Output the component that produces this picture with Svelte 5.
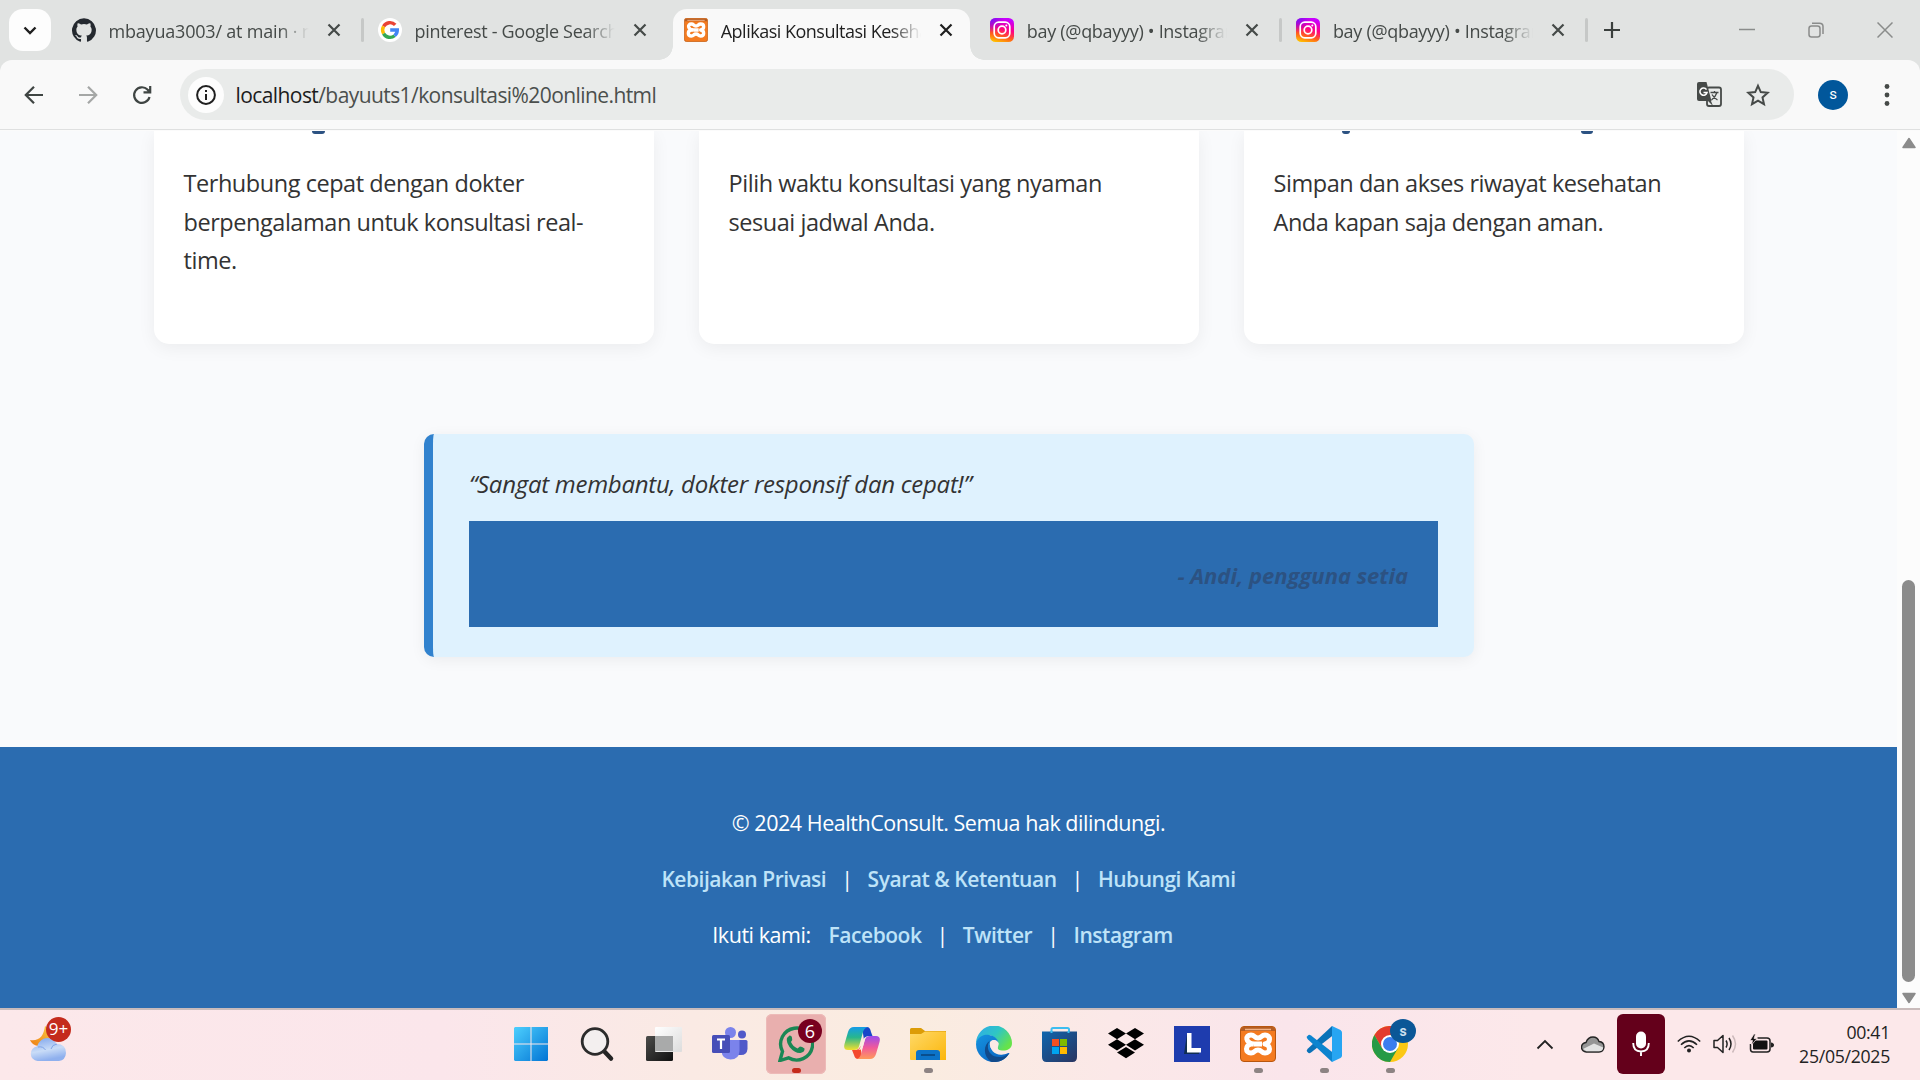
<script>
  const tabs = [
    { icon: 'github', title: 'mbayua3003/ at main · mbayua', ls: -0.2 },
    { icon: 'google', title: 'pinterest - Google Search', ls: -0.32, sep: true },
    { icon: 'xampp', title: 'Aplikasi Konsultasi Kesehatan', ls: -0.5, active: true },
    { icon: 'insta', title: 'bay (@qbayyy) • Instagram', ls: -0.3 },
    { icon: 'insta', title: 'bay (@qbayyy) • Instagram', ls: -0.3, sep: true }
  ];
  const cards = [
    { lines: ['Terhubung cepat dengan dokter', 'berpengalaman untuk konsultasi real-', 'time.'], marks: [[158, 13]] },
    { lines: ['Pilih waktu konsultasi yang nyaman', 'sesuai jadwal Anda.'], marks: [] },
    { lines: ['Simpan dan akses riwayat kesehatan', 'Anda kapan saja dengan aman.'], marks: [[98, 8], [337, 12]] }
  ];
  const apps = [
    'start', 'search', 'view', 'teams', 'whatsapp', 'copilot', 'files', 'edge',
    'store', 'dropbox', 'lapp', 'xampp', 'code', 'chrome'
  ];
  const running = ['files', 'xampp', 'code', 'chrome'];
</script>

{#snippet xampp()}
  <rect x="0.5" y="0.5" width="35" height="35" rx="3.5" fill="#f47b20" stroke="#b8560f" />
  <path d="M1 4Q1 1 4 1H32Q35 1 35 4V5H1Z" fill="#b45d22" />
  <path d="M5 3.500H31" stroke="#f0b184" stroke-width="1.500" />
  <path d="M14 18H22M14 18C5 17 5 9 11 9C15 9 14 12 18 12C22 12 21 9 25 9C31 9 31 17 25 18C31 19 31 27 25 27C21 27 22 24 18 24C14 24 15 27 11 27C5 27 5 19 11 18" fill="none" stroke="#fff" stroke-width="5" stroke-linejoin="round" />
  <path d="M12 14.500V13.500H13M24 14.500V13.500M12 21.500V22.500M24 21.500V22.500" fill="none" stroke="#f47b20" stroke-width="1.500" />
{/snippet}

{#snippet closeX()}
  <svg class="close" viewBox="0 0 14 14" width="14" height="14"><path d="M1.500 1.500L12.500 12.500M12.500 1.500L1.500 12.500" fill="none" stroke="currentColor" stroke-width="2.200" /></svg>
{/snippet}

<div class="screen">
  <header class="strip">
    <button class="chev" aria-label="Tabs"><svg width="14" height="9" viewBox="0 0 14 9"><path d="M1.500 1.500L7 7L12.500 1.500" fill="none" stroke="#1f1f1f" stroke-width="2.400" /></svg></button>
    {#each tabs as t}
      <div class="tab" class:active={t.active} class:sep={t.sep}>
        <svg class="fav" width="24" height="24" viewBox="0 0 24 24">
          {#if t.icon === 'github'}
            <path fill="#24292f" d="M12 .3a12 12 0 0 0-3.800 23.380c.6.120.83-.26.83-.57v-2.230c-3.340.72-4.040-1.420-4.040-1.420-.55-1.390-1.330-1.760-1.330-1.760-1.090-.74.08-.73.08-.73 1.200.09 1.840 1.240 1.840 1.240 1.070 1.830 2.810 1.300 3.490 1 .11-.78.42-1.310.76-1.610-2.660-.3-5.470-1.330-5.470-5.930 0-1.310.47-2.380 1.240-3.220-.14-.3-.54-1.520.1-3.180 0 0 1-.32 3.300 1.230a11.500 11.500 0 0 1 6 0c2.280-1.550 3.290-1.230 3.290-1.230.64 1.660.24 2.880.12 3.180a4.650 4.650 0 0 1 1.230 3.220c0 4.610-2.800 5.630-5.480 5.920.42.36.81 1.100.81 2.220v3.290c0 .31.2.69.82.57A12 12 0 0 0 12 .3" />
          {:else if t.icon === 'google'}
            <circle cx="12" cy="12" r="12" fill="#fff" />
            <g fill="none" stroke-width="3.400">
              <path d="M17.200 6.900A7.300 7.300 0 0 0 5.600 8.400" stroke="#ea4335" />
              <path d="M5.600 8.400A7.300 7.300 0 0 0 5.600 15.600" stroke="#fbbc05" />
              <path d="M5.600 15.600A7.300 7.300 0 0 0 16.600 17.700" stroke="#34a853" />
              <path d="M16.600 17.700A7.300 7.300 0 0 0 19.300 12H12.200" stroke="#4285f4" />
            </g>
          {:else if t.icon === 'xampp'}
            <g transform="scale(.6667)">{@render xampp()}</g>
          {:else}
            <defs>
              <linearGradient id="ig" x1="0.200" y1="1" x2="0.500" y2="0"><stop offset="0" stop-color="#ffc400" /><stop offset=".3" stop-color="#ff5a1f" /><stop offset=".6" stop-color="#ff0086" /><stop offset="1" stop-color="#c800ff" /></linearGradient>
              <radialGradient id="igc" cx="0" cy="0" r=".6"><stop offset="0" stop-color="#6a14ff" /><stop offset="1" stop-color="#6a14ff" stop-opacity="0" /></radialGradient>
            </defs>
            <rect width="24" height="24" rx="5.500" fill="url(#ig)" /><rect width="24" height="24" rx="5.500" fill="url(#igc)" />
            <rect x="4.200" y="4.200" width="15.600" height="15.600" rx="4.500" fill="none" stroke="#fff" stroke-width="1.700" />
            <circle cx="12" cy="12" r="3.800" fill="none" stroke="#fff" stroke-width="1.700" /><circle cx="16.300" cy="7.600" r="1" fill="#fff" />
          {/if}
        </svg>
        <span class="title" style:letter-spacing="{t.ls}px">{t.title}</span>
        {@render closeX()}
      </div>
    {/each}
    <svg class="plus" width="16" height="16" viewBox="0 0 16 16"><path d="M8 0V16M0 8H16" stroke="#3a3f3d" stroke-width="2.200" /></svg>
    <div class="win">
      <svg width="16" height="16" viewBox="0 0 16 16"><path d="M0 7.500H16" stroke="#8a8c8b" stroke-width="1.500" /></svg>
      <svg width="16" height="16" viewBox="0 0 16 16"><g fill="none" stroke="#8a8c8b" stroke-width="1.500"><rect x="1" y="4" width="11" height="11" rx="2.500" /><path d="M4 1.200H11.500Q15 1.200 15 4.500V12" /></g></svg>
      <svg width="16" height="16" viewBox="0 0 16 16"><path d="M.5.5L15.500 15.500M15.500.5L.5 15.500" stroke="#8a8c8b" stroke-width="1.500" /></svg>
    </div>
  </header>

  <nav class="toolbar">
    <svg class="nav" width="20" height="20" viewBox="0 0 20 20"><path d="M19 10H2M10 1.800L1.800 10L10 18.200" fill="none" stroke="#3f4543" stroke-width="2.200" /></svg>
    <svg class="nav" width="20" height="20" viewBox="0 0 20 20"><path d="M1 10H18M10 1.800L18.200 10L10 18.200" fill="none" stroke="#a5a7a6" stroke-width="2.200" /></svg>
    <svg class="nav" width="20" height="20" viewBox="0 0 20 20"><path d="M17.500 12A7.800 7.800 0 1 1 15.500 4.600L18 7M18.200 1V7.400H11.500" fill="none" stroke="#3f4543" stroke-width="2.200" /></svg>
    <div class="url">
      <span class="info"><svg width="20" height="20" viewBox="0 0 20 20"><circle cx="10" cy="10" r="8.900" fill="none" stroke="#1f1f1f" stroke-width="2" /><path d="M10 9V15M10 5V7" stroke="#1f1f1f" stroke-width="2" /></svg></span>
      <span class="addr"><b>localhost</b>/bayuuts1/konsultasi%20online.html</span>
      <svg class="translate" width="25" height="25" viewBox="0 0 25 25"><rect x="10" y="5.500" width="14" height="18.500" rx="2" fill="none" stroke="#464a48" stroke-width="1.800" /><path d="M2 0H9.500L14.500 19H2Q0 19 0 17V2Q0 0 2 0Z" fill="#464a48" /><path d="M14 19L16 24L11 19Z" fill="#464a48" /><path d="M9.500 7.600A3.600 3.600 0 1 0 10 10.500H6.500" fill="none" stroke="#fff" stroke-width="1.600" /><path d="M13.500 10.500H21.500M17.500 9V10.500M20 10.500Q18.500 15 14.500 18M15 12.500Q17 16 20.500 18" fill="none" stroke="#464a48" stroke-width="1.300" /></svg>
      <svg width="24" height="24" viewBox="0 0 24 24"><path d="M12 2.800L14.800 9.100L21.700 9.800L16.500 14.400L18 21.200L12 17.600L6 21.200L7.500 14.400L2.300 9.800L9.200 9.100Z" fill="none" stroke="#464a48" stroke-width="2" /></svg>
    </div>
    <span class="avatar">s</span>
    <svg class="dots" width="6" height="24" viewBox="0 0 6 24"><g fill="#464a48"><circle cx="3" cy="3.500" r="2.400" /><circle cx="3" cy="12" r="2.400" /><circle cx="3" cy="20.500" r="2.400" /></g></svg>
  </nav>

  <div class="view">
    <main class="page">
      <section class="cards">
        {#each cards as c}
          <article class="card">
            {#each c.marks as m}<i class="tail" style:left="{m[0]}px" style:width="{m[1]}px"></i>{/each}
            {#each c.lines as l}<p>{l}</p>{/each}
          </article>
        {/each}
      </section>
      <section class="quote">
        <p>“Sangat membantu, dokter responsif dan cepat!”</p>
        <div class="author">- Andi, pengguna setia</div>
      </section>
      <footer class="foot">
        <p class="l1">© 2024 HealthConsult. Semua hak dilindungi.</p>
        <p class="l2"><a href="#p">Kebijakan Privasi</a><span>|</span><a href="#s">Syarat &amp; Ketentuan</a><span>|</span><a href="#h">Hubungi Kami</a></p>
        <p class="l3"><em>Ikuti kami:</em><a href="#f">Facebook</a><span>|</span><a href="#t">Twitter</a><span>|</span><a href="#i">Instagram</a></p>
      </footer>
    </main>
    <aside class="scroll">
      <svg width="14" height="12" viewBox="0 0 14 12"><path d="M7 1.500L13 10.500H1Z" fill="#8b8b8b" stroke="#8b8b8b" stroke-width="1.500" stroke-linejoin="round" /></svg>
      <div class="thumb"></div>
      <svg width="14" height="12" viewBox="0 0 14 12"><path d="M7 10.500L13 1.500H1Z" fill="#8b8b8b" stroke="#8b8b8b" stroke-width="1.500" stroke-linejoin="round" /></svg>
    </aside>
  </div>

  <div class="taskbar">
    <div class="weather">
      <svg width="38" height="36" viewBox="0 0 38 36">
        <defs><linearGradient id="cl" x1="0" y1="0" x2="0.300" y2="1"><stop offset="0" stop-color="#7ba2ec" /><stop offset=".6" stop-color="#c9dcf7" /><stop offset="1" stop-color="#8fb0ee" /></linearGradient><linearGradient id="mo" x1="0" y1="1" x2="1" y2="0"><stop offset="0" stop-color="#ee7d12" /><stop offset="1" stop-color="#f9c841" /></linearGradient></defs>
        <path d="M15 0Q21 3 20 12L8 20Q2 19 0 14Q13 16 15 0Z" fill="url(#mo)" />
        <path d="M7.500 35A7.300 7.300 0 0 1 7 20.500Q10 12 17.500 12Q24 12 26.500 18Q36 18 36 27Q35.500 34 29 35Z" fill="url(#cl)" />
        <path d="M8 21Q13 20 15.500 24M21 23Q22 18.500 27 18" fill="none" stroke="#7fa3e8" stroke-width="1" />
      </svg>
      <span class="count">9+</span>
    </div>
    <div class="apps">
      {#each apps as a}
        <div class="app" class:lit={a === 'whatsapp'} class:run={running.includes(a)}>
          <svg width="36" height="36" viewBox="0 0 36 36">
            {#if a === 'start'}
              <defs><linearGradient id="st" gradientUnits="userSpaceOnUse" x1="0" y1="0" x2="36" y2="36"><stop offset="0" stop-color="#4fd2ff" /><stop offset="1" stop-color="#0071d3" /></linearGradient></defs>
              <path class="shift" fill="url(#st)" d="M2 1H17.500V17.500H1V2ZM18.500 1H35V17.500H18.500ZM1 18.500H17.500V35H2L1 34ZM18.500 18.500H35V34L34 35H18.500Z" />
            {:else if a === 'search'}
              <path d="M23 24L31 32.500" stroke="#242424" stroke-width="4.500" stroke-linecap="round" /><circle cx="15" cy="15.500" r="12.800" fill="#f3efef" stroke="#2b2b2b" stroke-width="2.800" />
            {:else if a === 'view'}
              <defs><linearGradient id="vd" x1="0" y1="0" x2="1" y2="1"><stop offset="0" stop-color="#4c4c4a" /><stop offset="1" stop-color="#101010" /></linearGradient><linearGradient id="vw" x1="0" y1="0" x2="1" y2="1"><stop offset="0" stop-color="#fff" /><stop offset="1" stop-color="#dcdcdc" /></linearGradient></defs>
              <rect y="10" width="27" height="25" rx="1.500" fill="url(#vd)" /><rect x="9" y="1" width="27" height="25" rx="1" fill="url(#vw)" /><path d="M9 10H27V25H9Z" fill="#a9aaaa" />
            {:else if a === 'teams'}
              <circle cx="18.500" cy="6.500" r="5.500" fill="#7b83eb" /><circle cx="30" cy="8.500" r="4" fill="#5059c9" />
              <path d="M25 14H34Q35.500 14 35.500 15.500V23Q35 29 29 29H25Z" fill="#5059c9" /><path d="M9 14H27.500V25Q27 33.500 18.500 33.500Q10 33 9.500 25Z" fill="#7b83eb" />
              <rect y="9" width="18" height="18" rx="1.500" fill="#464eb8" /><path d="M5 13.500H13M9 13.500V23" stroke="#fff" stroke-width="2.200" />
            {:else if a === 'whatsapp'}
              <path d="M2 34.500L4.500 25.500A16 16 0 1 1 10.500 31.800Z" fill="none" stroke="#1b8755" stroke-width="3.400" />
              <path d="M11.500 9.500Q14 9.500 14 12Q15 14.500 13 16Q15 20.500 19.500 22.500L22 20.500Q24 20.500 26.500 22.500Q27 26 22.500 27Q17 27.500 11.500 21Q6 13 11.500 9.500Z" fill="#1b8755" />
            {:else if a === 'copilot'}
              <defs><linearGradient id="ca" x1="0" y1="0" x2="0" y2="1"><stop offset="0" stop-color="#159be8" /><stop offset=".45" stop-color="#28b78c" /><stop offset="1" stop-color="#f5e02d" /></linearGradient><linearGradient id="cb" x1="0" y1="0" x2="0" y2="1"><stop offset="0" stop-color="#9c4cec" /><stop offset=".5" stop-color="#f05a9b" /><stop offset="1" stop-color="#ff9a5a" /></linearGradient></defs>
              <path d="M18 1H23Q26 1 27 6L28.500 10H25Q21 10 20 14Z" fill="#1747c9" />
              <path d="M18 33H14Q11 33 10 29L8 24H11Q15 24 16.500 20Z" fill="#f4492e" />
              <path d="M10 1H24Q20 2 19 6L15 20.500Q14 24 10 24H4Q-1 24 .5 18L4 6Q5.500 1 10 1Z" fill="url(#ca)" />
              <path d="M26 33H13Q16 32 17 28L21 13.500Q22 10 26 10H32Q37 10 35.500 16L32 28Q30.500 33 26 33Z" fill="url(#cb)" />
              <path d="M19 14Q20 11 22.500 10.500Q21 12 20.500 15L18.500 22Q17.500 24 14 24Q15.500 23.500 16.500 21Z" fill="#fbeee2" />
            {:else if a === 'files'}
              <defs><linearGradient id="fo" x1="0" y1="0" x2="1" y2="1"><stop offset="0" stop-color="#ffd968" /><stop offset="1" stop-color="#fbb60b" /></linearGradient></defs>
              <path d="M0 3.500Q0 2 1.500 2H11L15 5H36V12H0Z" fill="#dc9c07" /><path d="M0 8H11L15 5.500H35Q36 5.500 36 6.500V34H1Q0 34 0 33Z" fill="url(#fo)" />
              <path d="M6 34V27Q6 24 9 24H27Q30 24 30 27V34Z" fill="#0c73c8" /><path d="M11 29H25" stroke="#0a4a86" stroke-width="1.800" />
            {:else if a === 'edge'}
              <defs><linearGradient id="ea" x1="0" y1="0" x2="1" y2=".6"><stop offset="0" stop-color="#2fa8ee" /><stop offset=".55" stop-color="#2fc6c4" /><stop offset="1" stop-color="#66e34a" /></linearGradient><linearGradient id="eb" x1="0" y1="0" x2=".8" y2="1"><stop offset="0" stop-color="#1593e0" /><stop offset="1" stop-color="#0b63c1" /></linearGradient></defs>
              <path d="M0 18A18 18 0 0 1 36 17C36 23 31 25 26 24.500C21 24 21.500 22.500 22.500 19C23 15 20 12 15 9.500C9 8 2 12 0 18Z" fill="url(#ea)" />
              <path d="M0 18C1 11 7 8.500 12 8.800C18 9.500 22 13 22.300 16.500C20 13 15.500 13 14 16.500C13 24 20 30 27 28.500C30 28 32 26.500 33.500 27C30 33 25 36 18 36A18 18 0 0 1 0 18Z" fill="url(#eb)" />
              <path d="M14 14.500C9 21 13 31.500 24 31C28 31 31 29 33.500 27C29 34.500 22 37 15 35.700C7 30 7 19 14 14.500Z" fill="#114a8b" />
              <path d="M14 16.500C15.500 13 21 13 22.500 17.500C22 20 20.500 21.500 21.500 23C23.500 25.500 28 25.500 31 24.500C33 24 33.500 25.500 33 26.200C29 28.500 20 28.500 16 23.500C14 21 13.500 18.500 14 16.500Z" fill="#fbeae5" />
            {:else if a === 'store'}
              <defs><linearGradient id="so" x1="0" y1="0" x2="1" y2="1"><stop offset="0" stop-color="#0f65ae" /><stop offset="1" stop-color="#2a3560" /></linearGradient></defs>
              <path d="M9.500 7V3.500Q9.500 2 11 2H25.500Q27 2 27 3.500V7" fill="none" stroke="#3cbdf0" stroke-width="2" /><path d="M0 5.500H35V31Q35 36 30.500 36H4.500Q0 36 0 31Z" fill="url(#so)" />
              <path d="M9.500 5V7M26.500 5V7" stroke="#3cbdf0" stroke-width="2" />
              <path d="M10 13H17V20H10Z" fill="#f25022" /><path d="M18 13H25V20H18Z" fill="#7fba00" /><path d="M10 21H17V28H10Z" fill="#00a4ef" /><path d="M18 21H25V28H18Z" fill="#ffb900" />
            {:else if a === 'dropbox'}
              <path d="M9 2L18 7.500L9 13.200L0 7.500ZM27 2L36 7.500L27 13.200L18 7.500ZM9 13.200L18 18.800L9 24.500L0 18.800ZM27 13.200L36 18.800L27 24.500L18 18.800ZM18 21L27 26.500L18 32.200L9 26.500Z" fill="#000" />
            {:else if a === 'lapp'}
              <rect width="36" height="36" fill="#1e3cae" /><path d="M13 8L10 28H25V22H14Z" fill="#102e52" /><path d="M13 7H17.500V22H27V26.500H13Z" fill="#fff" />
            {:else if a === 'xampp'}
              {@render xampp()}
            {:else if a === 'code'}
              <path d="M26 0L2 22.500Q0 24.500 1 25.500L2.500 27Q3.500 27.500 5 26.500L30 7Z" fill="#0a72b8" /><path d="M26 36L2 13.500Q0 11.500 1 10.500L2.500 9Q3.500 8.500 5 9.500L30 29Z" fill="#0c84cf" /><path d="M26 0L34.500 4Q36 5 36 6.500V29.500Q36 31 34.500 32L26 36Z" fill="#27a5f2" />
            {:else}
              <circle cx="18" cy="18" r="18" fill="#fcc815" />
              <path d="M2.400 9A18 18 0 0 1 33.600 9H18L10.200 22.500Z" fill="#e33b2e" /><path d="M2.400 9A18 18 0 0 0 18 36L25.800 22.500H10.200Z" fill="#269a46" />
              <circle cx="18" cy="18" r="9" fill="#fff" /><circle cx="18" cy="18" r="7" fill="#3b7ded" />
            {/if}
          </svg>
          {#if a === 'whatsapp'}<span class="badge">6</span>{/if}
          {#if a === 'chrome'}<span class="badge profile">s</span>{/if}
        </div>
      {/each}
    </div>
    <div class="tray">
      <svg class="up" width="18" height="11" viewBox="0 0 18 11"><path d="M1.500 9.500L9 2L16.500 9.500" fill="none" stroke="#222" stroke-width="1.800" /></svg>
      <svg class="cloud" width="24" height="17" viewBox="0 0 24 17"><path d="M5.500 16A4.700 4.700 0 0 1 5 6.500Q7 1 12 1Q16.500 1 18 5.500Q23 6 23 11Q22.500 16 18 16Z" fill="#959595" stroke="#222" stroke-width="1.400" /><path d="M2 13L13 7.500L22.200 11.500Q22 15.200 18 15.200H5.500Z" fill="#e2e2e2" /></svg>
      <span class="mic"><svg width="18" height="26" viewBox="0 0 18 26"><rect x="4" y="0.500" width="10" height="17" rx="5" fill="#fff" /><path d="M1.200 12Q1.200 20.500 9 20.500Q16.800 20.500 16.800 12M9 20.500V25" fill="none" stroke="#fff" stroke-width="1.900" /></svg></span>
      <svg class="wifi" width="24" height="18" viewBox="0 0 24 18"><g fill="none" stroke="#222" stroke-width="1.600"><path d="M.8 6.500Q12-4 23.200 6.500" /><path d="M4 9.800Q12 2 20 9.800" /><path d="M7.300 13Q12 8.200 16.700 13" /></g><circle cx="12" cy="15.500" r="2" fill="#222" /></svg>
      <svg class="sound" width="25" height="20" viewBox="0 0 25 20"><g fill="none" stroke="#222" stroke-width="1.500" stroke-linejoin="round"><path d="M1 6.500H4.500L10 1.500V18.500L4.500 13.500H1Z" /><path d="M13 6.500Q15.200 10 13 13.500M16 4Q20 10 16 16" /><path d="M19.500 1.500Q25.500 10 19.500 18.500" stroke="#ccb9bb" /></g></svg>
      <svg class="batt" width="25" height="20" viewBox="0 0 25 20"><path d="M8.500 4H18Q21 4 21 7V15Q21 18 18 18H4Q1.500 18 1.500 15V10" fill="none" stroke="#222" stroke-width="1.500" /><rect x="4" y="6.500" width="14.500" height="9" rx="1" fill="#111" /><path d="M22 8.500Q25 9 25 11Q25 13 22 13.500Z" fill="#222" /><path d="M5 0L1 6.500H3.500L2.500 11L8 4.500H5L6.500 0Z" fill="#111" stroke="#fce8ea" stroke-width=".7" /></svg>
      <div class="clock"><span>00:41</span><span>25/05/2025</span></div>
    </div>
  </div>
</div>

<style>
  :global(body) { margin: 0; overflow: hidden; }
  .screen { width: 1920px; height: 1080px; display: flex; flex-direction: column; overflow: hidden; font-family: "Open Sans", "Noto Sans", sans-serif; background: #e1e3e2; }
  svg { display: block; flex: none; }
  p { margin: 0; }

  .strip { height: 60px; flex: none; display: flex; align-items: center; background: #e1e3e2; box-sizing: border-box; padding-left: 9px; }
  .chev { width: 42px; height: 42px; border: 0; padding: 0; border-radius: 14px; background: #fdfdfd; display: flex; align-items: center; justify-content: center; flex: none; }
  .tab { position: relative; width: 306.100px; height: 60px; flex: none; box-sizing: border-box; padding-left: 21px; display: flex; align-items: center; color: #454a48; font-size: 18px; }
  .tab .title { z-index: 1; width: 202px; margin-left: 12.500px; overflow: hidden; white-space: nowrap; line-height: 28px; padding-top: 2px; -webkit-mask-image: linear-gradient(90deg, #000 84%, transparent 99%); mask-image: linear-gradient(90deg, #000 84%, transparent 99%); }
  .tab .fav, .tab .close { position: relative; z-index: 1; }
  .tab .close { margin-left: 16px; }
  .tab.sep::before { content: ""; position: absolute; left: 4px; top: 18px; width: 3px; height: 24px; border-radius: 2px; background: #c6c8c7; }
  .tab.sep:nth-of-type(5)::after { content: ""; position: absolute; right: -7px; top: 18px; width: 3px; height: 24px; border-radius: 2px; background: #c6c8c7; }
  .tab.active { color: #1f1f1f; }
  .tab.active::before { content: ""; position: absolute; left: 10px; top: 9px; width: 297px; height: 51px; border-radius: 14px 14px 0 0; background: #f9f9f9; }
  .tab.active::after { content: ""; position: absolute; left: -4px; top: 46px; width: 325px; height: 14px; background: radial-gradient(circle at 0 0, transparent 13.500px, #f9f9f9 14px) left / 14px 14px no-repeat, radial-gradient(circle at 100% 0, transparent 13.500px, #f9f9f9 14px) right / 14px 14px no-repeat; }
  .plus { margin-left: 23px; }
  .win { margin-left: auto; margin-right: 27px; display: flex; gap: 53px; }

  .toolbar { height: 70px; flex: none; box-sizing: border-box; display: flex; align-items: center; padding: 0 30px 0 23.500px; background: #f9f9f9; border-bottom: 1px solid #dfe0e0; border-radius: 12px 12px 0 0; }
  .nav { margin-right: 34px; }
  .url { width: 1614px; height: 51px; margin-left: -5.500px; box-sizing: border-box; display: flex; align-items: center; border-radius: 26px; background: #e9ebea; padding: 0 24px 0 7.500px; flex: none; }
  .info { width: 36px; height: 36px; border-radius: 50%; background: #fdfdfd; display: flex; align-items: center; justify-content: center; }
  .addr { margin-left: 12px; flex: 1; font-size: 21px; letter-spacing: -.58px; color: #4b4f4d; line-height: 30px; }
  .addr b { font-weight: 400; color: #1c1c1c; }
  .translate { margin-right: 24px; }
  .avatar { width: 30px; height: 30px; margin-left: 24px; border-radius: 50%; background: #01579b; color: #fff; font: 15px/29px Roboto, sans-serif; text-align: center; }
  .dots { margin-left: auto; }

  .view { height: 878px; box-sizing: border-box; border-top: 1px solid #fbfbfb; flex: none; display: flex; }
  .page { width: 1897px; background: #f9fafc; overflow: hidden; display: flex; flex-direction: column; align-items: center; }
  .cards { display: flex; gap: 45px; height: 213px; flex: none; }
  .card { position: relative; width: 500px; box-sizing: border-box; background: #fff; border-radius: 0 0 15px 15px; padding: 33px 30px 0; box-shadow: 0 4px 18px rgba(0, 0, 0, .06); color: #333; }
  .card p { font-size: 23.500px; line-height: 38.600px; white-space: nowrap; letter-spacing: -.45px; }
  .tail { position: absolute; top: 0; height: 3px; background: #2c5282; border-radius: 0 0 8px 8px; }
  .quote { width: 1050px; height: 223px; margin: 90px 0 0 1px; box-sizing: border-box; flex: none; border-left: 9px solid #3182ce; border-radius: 10px; background: #dff2fe; padding: 31px 36px 30px; box-shadow: 0 3px 15px rgba(0, 0, 0, .06); color: #333; }
  .quote p { font-size: 24px; line-height: 38px; height: 56px; font-style: italic; white-space: nowrap; letter-spacing: -.27px; }
  .author { height: 106px; box-sizing: border-box; padding-right: 30px; background: #2b6cb0; color: #2c5282; font-size: 22px; line-height: 108px; font-weight: 700; font-style: italic; text-align: right; }
  .foot { width: 100%; height: 261px; margin-top: 90px; box-sizing: border-box; flex: none; background: #2b6cb0; color: #fff; padding-top: 58px; font-size: 21.500px; letter-spacing: -.46px; }
  .foot p { height: 36px; line-height: 36px; margin-bottom: 20px; display: flex; justify-content: center; white-space: nowrap; }
  .foot a { color: #bee3f8; text-decoration: none; font-weight: 600; font-size: 21px; letter-spacing: -.47px; }
  .foot span { margin: 0 15px; }
  .foot em { font-style: normal; margin-right: 18px; }
  .foot .l3 { margin-right: 12px; }

  .scroll { width: 23px; background: #fcfcfc; display: flex; flex-direction: column; align-items: center; box-sizing: border-box; padding: 6px 0 4px; }
  .thumb { width: 13px; height: 402px; margin: auto 0 10px; border-radius: 7px; background: #8b8b8b; }

  .taskbar { height: 72px; flex: none; box-sizing: border-box; border-top: 2px solid #c9bbbb; padding-bottom: 2px; display: flex; align-items: center; background: linear-gradient(90deg, #fce8ea 0%, #fbe6eb 23%, #faeae4 36%, #faece0 48%, #fbe8e8 58%, #fae5eb 67%, #fce8ea 80%); }
  .weather { position: relative; margin-left: 29.500px; width: 474px; height: 70px; padding-top: 17px; box-sizing: border-box; flex: none; }
  .count { position: absolute; left: 16.500px; top: 8px; width: 25px; height: 25px; border-radius: 50%; background: #c42b1c; color: #fff; font-size: 17px; line-height: 24px; text-align: center; }
  .apps { display: flex; gap: 6px; margin-left: -1.500px; }
  .app { position: relative; width: 60px; height: 60px; border-radius: 6px; display: flex; align-items: center; justify-content: center; }
  .shift { transform: translateX(-1px); }
  .app.lit { background: #e9afae; box-shadow: inset 0 0 0 1px #edbab8; }
  .app.run::after, .app.lit::after { content: ""; position: absolute; left: 26px; bottom: 1px; width: 9px; height: 5px; border-radius: 3px; background: #8d8383; }
  .app.lit::after { background: #c42b1c; }
  .badge { position: absolute; left: 32px; top: 5px; width: 24px; height: 24px; border-radius: 50%; background: #78001f; color: #fff; font-size: 18px; line-height: 24px; text-align: center; }
  .badge.profile { left: 30px; width: 26px; background: #0b5797; color: #cfe0ef; font: 700 14px/24px Roboto, sans-serif; }
  .tray { margin-left: auto; display: flex; align-items: center; margin-right: 30px; }
  .cloud { margin-left: 27px; }
  .mic { width: 48px; height: 60px; margin-left: 12px; border-radius: 6px; background: #64001b; display: flex; align-items: center; justify-content: center; }
  .wifi { margin-left: 12px; }
  .sound { margin-left: 12px; }
  .batt { margin-left: 11px; }
  .clock { width: 116px; display: flex; flex-direction: column; align-items: flex-end; font-size: 17.700px; line-height: 24px; color: #222; letter-spacing: -.3px; }
</style>
